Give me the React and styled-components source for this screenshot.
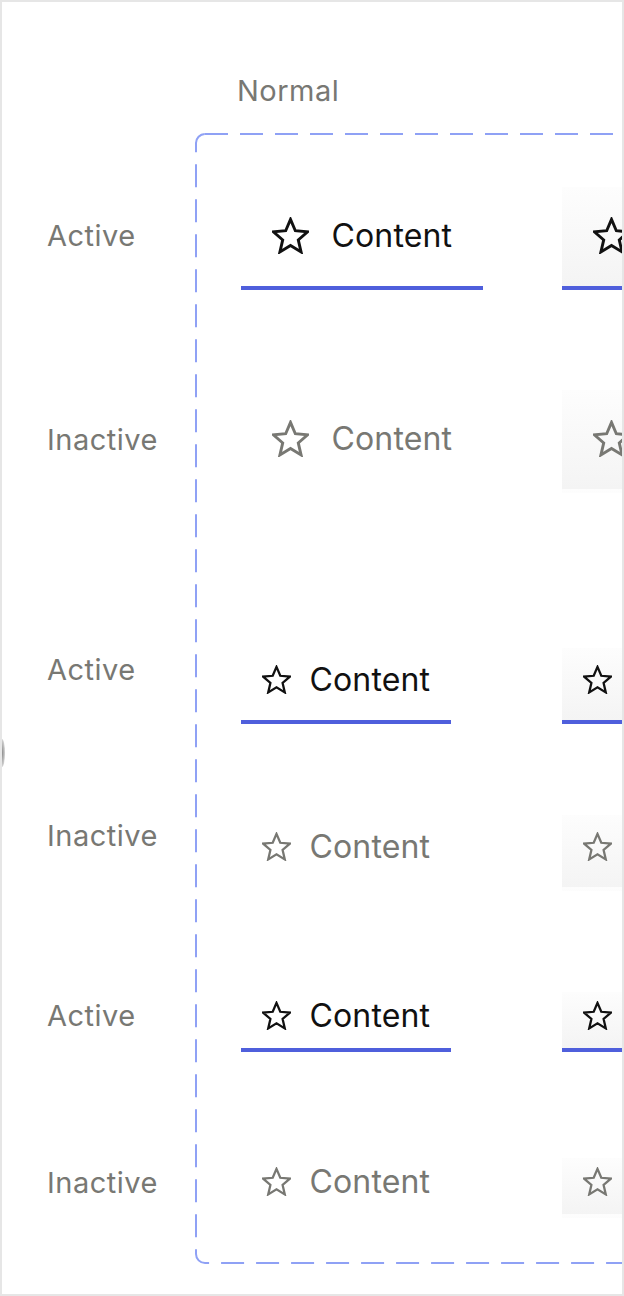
import styled, { createGlobalStyle } from 'styled-components';

const GlobalStyle = createGlobalStyle`
  html, body {
    margin: 0;
    padding: 0;
    background: #ffffff;
  }
  body {
    font-family: Inter, "Noto Sans", sans-serif;
  }
`;

const sizes = {
  lg: { star: 37, gap: 23, padX: 30.5, padBottom: 2 },
  md: { star: 29, gap: 19, padX: 20.5, padBottom: 10 },
  sm: { star: 29, gap: 19, padX: 20.5, padBottom: 10 },
};

const rows = [
  { size: 'lg', active: true, label: 'Active', labelTop: 32 },
  { size: 'lg', active: false, label: 'Inactive', labelTop: 33 },
  { size: 'md', active: true, label: 'Active', labelTop: 5 },
  { size: 'md', active: false, label: 'Inactive', labelTop: 4 },
  { size: 'sm', active: true, label: 'Active', labelTop: 7 },
  { size: 'sm', active: false, label: 'Inactive', labelTop: 8 },
];

function Star({ size }) {
  return (
    <svg width={size} height={size} viewBox="1.2 0.6 21.6 21.6" fill="none">
      <polygon
        points="12,2 14.81,8.62 22,9.24 16.54,13.97 18.18,21 12,17.27 5.82,21 7.46,13.97 2,9.24 9.19,8.62"
        stroke="currentColor"
        strokeWidth="1.7"
        strokeLinejoin="miter"
      />
    </svg>
  );
}

function App() {
  return (
    <>
      <GlobalStyle />
      <Page>
        <EdgeNub />
        <Board>
          <Heading>Normal</Heading>
          <Frame>
            <svg width="100%" height="100%">
              <rect
                x="0"
                y="0"
                width="100%"
                height="100%"
                rx="9"
                fill="none"
                stroke="#8fa1f5"
                strokeWidth="2"
                strokeDasharray="23 12"
              />
            </svg>
          </Frame>
          {rows.map((r, i) => (
            <Row key={i} $line={4 + i * 2}>
              <Label $top={r.labelTop}>{r.label}</Label>
              <Tab $size={r.size} $active={r.active} $col={3}>
                <Star size={sizes[r.size].star} />
                <span>Content</span>
              </Tab>
              <Tab $size={r.size} $active={r.active} $col={4} $tinted>
                <Star size={sizes[r.size].star} />
                <span>Content</span>
              </Tab>
            </Row>
          ))}
        </Board>
      </Page>
    </>
  );
}

const Page = styled.div`
  position: relative;
  width: 624px;
  height: 1296px;
  box-sizing: border-box;
  border: 2px solid #e6e6e6;
  overflow: hidden;
  padding-top: 72px;
  background: #ffffff;
`;

const EdgeNub = styled.div`
  position: absolute;
  left: -3px;
  top: 737px;
  width: 6px;
  height: 28px;
  border-radius: 50%;
  background: radial-gradient(ellipse at center, #8a8a8a 0%, #c8c8c8 60%, rgba(255, 255, 255, 0) 100%);
`;

const Board = styled.div`
  display: grid;
  grid-template-columns: 194px 45px 321px 321px 321px;
  grid-template-rows: 34px 26px 53px 103px 100px 103px 155px 76px 91px 76px 101px 60px 106px 60px 45px;
`;

const Heading = styled.div`
  grid-column: 2 / span 2;
  grid-row: 1;
  padding-left: 41px;
  font-size: 29px;
  letter-spacing: 0.5px;
  line-height: 34px;
  color: #787873;
`;

const Frame = styled.div`
  grid-column: 2 / -1;
  grid-row: 3 / -1;
  position: relative;

  svg {
    position: absolute;
    inset: 0;
    overflow: visible;
    pointer-events: none;
  }
`;

const Row = styled.div`
  display: contents;

  & > * {
    grid-row: ${(p) => p.$line};
  }
`;

const Label = styled.div`
  grid-column: 1;
  align-self: start;
  margin-top: ${(p) => p.$top}px;
  padding-left: 45px;
  font-size: 29px;
  letter-spacing: 0.5px;
  line-height: 34px;
  color: #787873;
`;

const Tab = styled.div`
  grid-column: ${(p) => p.$col};
  justify-self: start;
  height: 100%;
  box-sizing: border-box;
  display: flex;
  align-items: center;
  gap: ${(p) => sizes[p.$size].gap}px;
  padding: 0 ${(p) => sizes[p.$size].padX}px ${(p) => sizes[p.$size].padBottom}px;
  border-bottom: 4px solid ${(p) => (p.$active ? '#4f5fdc' : 'transparent')};
  background: ${(p) => (p.$tinted ? 'linear-gradient(#fdfdfd, #f4f4f4)' : 'transparent')};
  color: ${(p) => (p.$active ? '#111111' : '#787873')};
  font-size: 32px;
  letter-spacing: 0.15px;
  line-height: 39px;
  white-space: nowrap;

  svg {
    flex: none;
  }
`;

export default App;
